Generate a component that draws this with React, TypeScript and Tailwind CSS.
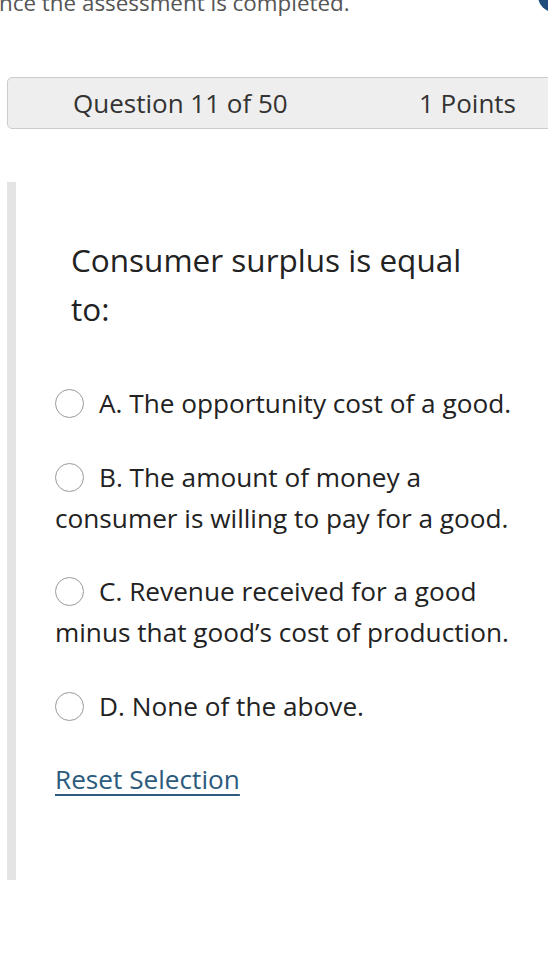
import React from 'react'

const options = [
  'A. The opportunity cost of a good.',
  'B. The amount of money a consumer is willing to pay for a good.',
  'C. Revenue received for a good minus that good\u2019s cost of production.',
  'D. None of the above.',
]

export default function App() {
  return (
    <div className="relative w-[548px] h-[976px] overflow-hidden bg-white font-['Open_Sans',sans-serif] text-[#222]">
      {/* corner badge peeking in */}
      <span className="absolute right-[-22px] top-[-20px] w-8 h-8 rounded-full bg-[#1d4d7a]" />

      {/* instructions, scrolled off the top */}
      <p className="mt-[-11px] ml-[-1px] h-7 text-[22.4px] leading-7 text-[#555] whitespace-nowrap">
        nce the assessment is completed.
      </p>

      {/* question header */}
      <div className="mt-[60px] ml-[7px] w-[575px] h-[52px] flex items-center justify-between px-[65px] bg-[#eeeeee] border border-[#cccccc] rounded-[5px] text-[26px] text-[#333]">
        <span>Question 11 of 50</span>
        <span>1 Points</span>
      </div>

      {/* question body */}
      <div className="mt-[53px] ml-[7px] flex">
        <div className="w-[9px] bg-[#e4e4e4] shrink-0" />
        <div className="pl-[39px] pt-[53px] pb-[80px] w-[500px]">
          <h2 className="pl-4 w-[440px] text-[31.5px] leading-[49px] text-[#222]">
            Consumer surplus is equal to:
          </h2>

          <ul className="mt-[50px] flex flex-col gap-[32.5px] w-[468px]">
            {options.map((o) => (
              <li key={o} className="text-[26.2px] leading-[41px] text-[#222]">
                <span className="inline-block align-middle mr-[15px] mt-[-4px] w-[29px] h-[29px] rounded-full border border-[#9a9a9a] bg-white" />
                {o}
              </li>
            ))}
          </ul>

          <a href="#" className="block w-fit mt-[32px] text-[26.2px] leading-[41px] text-[#2b5b7d] underline decoration-2 underline-offset-[5px]">
            Reset Selection
          </a>
        </div>
      </div>
    </div>
  )
}
